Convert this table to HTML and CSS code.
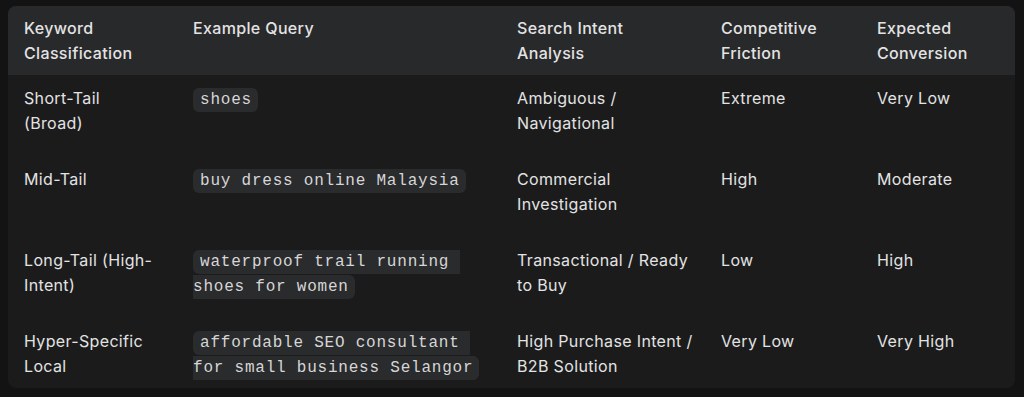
FILE: index.html
```html
<!DOCTYPE html>
<html lang="en">
<head>
<meta charset="utf-8">
<title>Keyword Classification</title>
<link rel="stylesheet" href="styles.css">
</head>
<body>
<div class="table-wrap">
  <table class="kw-table">
    <colgroup>
      <col class="c1"><col class="c2"><col class="c3"><col class="c4"><col class="c5">
    </colgroup>
    <thead>
      <tr>
        <th>Keyword Classification</th>
        <th>Example Query</th>
        <th>Search Intent Analysis</th>
        <th>Competitive Friction</th>
        <th>Expected Conversion</th>
      </tr>
    </thead>
    <tbody>
      <tr>
        <td>Short-Tail (Broad)</td>
        <td><code>shoes</code></td>
        <td>Ambiguous / Navigational</td>
        <td>Extreme</td>
        <td>Very Low</td>
      </tr>
      <tr>
        <td>Mid-Tail</td>
        <td><code>buy dress online Malaysia</code></td>
        <td>Commercial Investigation</td>
        <td>High</td>
        <td>Moderate</td>
      </tr>
      <tr>
        <td>Long-Tail (High-Intent)</td>
        <td><code>waterproof trail running shoes for women</code></td>
        <td>Transactional / Ready to Buy</td>
        <td>Low</td>
        <td>High</td>
      </tr>
      <tr>
        <td>Hyper-Specific Local</td>
        <td><code>affordable SEO consultant for small business Selangor</code></td>
        <td>High Purchase Intent / B2B Solution</td>
        <td>Very Low</td>
        <td>Very High</td>
      </tr>
    </tbody>
  </table>
</div>
</body>
</html>
```

FILE: styles.css
```css
html, body {
  margin: 0;
  padding: 0;
  background: #131314;
}

body {
  padding: 6px 9px 0 8px;
  font-family: "Inter", "Noto Sans", "Liberation Sans", sans-serif;
  color: #e3e3e3;
  font-size: 16px;
  letter-spacing: 0.35px;
}

.table-wrap {
  background: #1b1b1c;
  border-radius: 8px;
  overflow: hidden;
}

.kw-table {
  width: 100%;
  border-collapse: collapse;
  table-layout: fixed;
  line-height: 24.5px;
}

.c1 { width: 169px; }
.c2 { width: 324px; }
.c3 { width: 204px; }
.c4 { width: 156px; }
.c5 { width: 154px; }

.kw-table th {
  background: #28292b;
  text-align: left;
  font-weight: 500;
  vertical-align: top;
  padding: 10px 16px;
}

.kw-table td {
  vertical-align: top;
  padding: 11px 16px 21px;
}

.kw-table td:nth-child(3) {
  padding-right: 11.5px;
}

.kw-table tbody tr:last-child td {
  padding-bottom: 10px;
}

.kw-table code {
  font-family: "Liberation Mono", "DejaVu Sans Mono", monospace;
  font-size: 16px;
  line-height: 1;
  letter-spacing: 0.78px;
  white-space: pre-wrap;
  background: #2a2b2d;
  border-radius: 6px;
  padding: 3px 6px 3px 7px;
  color: #d6d6d6;
}
```
